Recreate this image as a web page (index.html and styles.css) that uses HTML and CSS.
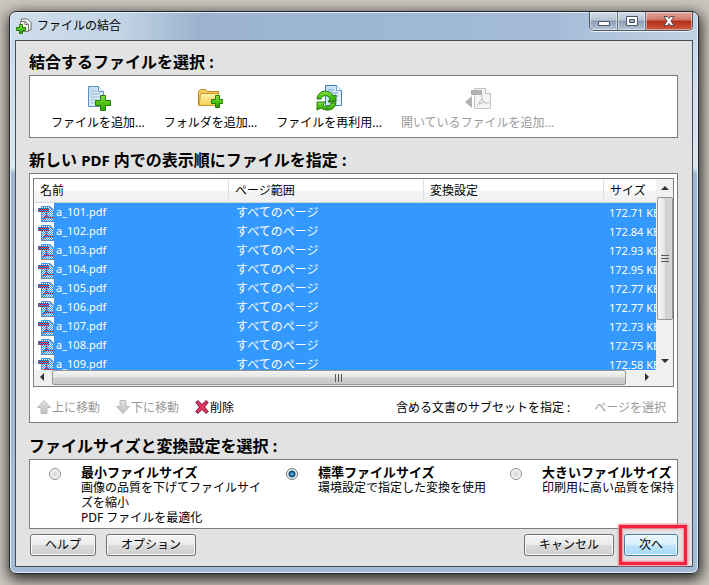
FILE: index.html
```html
<!DOCTYPE html>
<html lang="ja">
<head>
<meta charset="utf-8">
<title>ファイルの結合</title>
<link rel="stylesheet" href="styles.css">
</head>
<body>
<svg class="defs" aria-hidden="true">
  <defs>
    <linearGradient id="green" x1="0" y1="0" x2="0" y2="1"><stop offset="0" stop-color="#8be04a"/><stop offset=".5" stop-color="#4cc414"/><stop offset="1" stop-color="#2f9a08"/></linearGradient>
    <linearGradient id="sheet" x1="0" y1="0" x2="1" y2="1"><stop offset="0" stop-color="#b9daf2"/><stop offset="1" stop-color="#f4faff"/></linearGradient>
    <linearGradient id="gold" x1="0" y1="0" x2="0" y2="1"><stop offset="0" stop-color="#fff3a8"/><stop offset="1" stop-color="#f5cd52"/></linearGradient>
    <linearGradient id="silver" x1="0" y1="0" x2="0" y2="1"><stop offset="0" stop-color="#e4e4e4"/><stop offset="1" stop-color="#bdbdbd"/></linearGradient>
    <pattern id="dither" width="2" height="2" patternUnits="userSpaceOnUse"><path d="M0 0h1v1H0zM1 1h1v1H1z" fill="#3399ff"/></pattern>
    <symbol id="pdf" viewBox="0 0 16 16">
      <path d="M3.500 .5h8l4 4v11h-12z" fill="#eef3fa" stroke="#7088a8"/>
      <path d="M0 2h11v4H0z" fill="#b01828"/>
      <path d="M8.500 6v3L5 14M8.500 9l3 2.500h4M7 12l4-1" fill="none" stroke="#b01828" stroke-width="1.500"/>
      <path d="M0 2h3V0h9l4 4v12H3V6H0z" fill="url(#dither)"/>
    </symbol>
  </defs>
</svg>
<main class="window">
  <header class="titlebar">
    <svg class="app-icon" width="16" height="16" viewBox="0 0 16 16" aria-hidden="true">
      <path d="M5.500 3V1h6L15 4.500V12h-2.500" fill="#fff" stroke="#666"/>
      <path d="M4.500 3.500h5l3 3v7h-8z" fill="#eee" stroke="#777"/>
      <path d="M9 3.500v3h3.500" fill="none" stroke="#777"/>
      <path d="M3.500 6.500h3v3h3v3h-3v3h-3v-3h-3v-3h3z" fill="url(#green)" stroke="#22790a"/>
    </svg>
    <h1>ファイルの結合</h1>
    <div class="caption">
      <button type="button" aria-label="最小化"><svg width="14" height="12" viewBox="0 0 14 12"><path d="M1.500 6.500h11v4h-11z" fill="#fff" stroke="#4b5568"/></svg></button>
      <button type="button" aria-label="最大化"><svg width="14" height="12" viewBox="0 0 14 12"><path fill-rule="evenodd" d="M1.500 1.500h11v9h-11zM4.500 4.500v3h5v-3z" fill="#fff" stroke="#4b5568"/></svg></button>
      <button type="button" class="close" aria-label="閉じる"><svg width="14" height="12" viewBox="0 0 14 12"><path d="M2 1.500h3.500L7 3.500l1.500-2H12L9 6l3 4.500H8.500L7 8.500l-1.500 2H2L5 6z" fill="#fff" stroke="#57404a"/></svg></button>
    </div>
  </header>

  <div class="content">
    <h2>結合するファイルを選択 :</h2>
    <div class="panel toolbar">
      <button type="button">
        <svg width="26" height="26" viewBox="0 0 26 26" aria-hidden="true">
          <path d="M3.500 1.500h10l5 5v15h-15z" fill="url(#sheet)" stroke="#5d93be"/>
          <path d="M13.500 1.500v5h5" fill="#fff" stroke="#5d93be"/>
          <path d="M6 6h6M6 9h9M6 12h9M6 15h7M6 18h6" stroke="#9db9d0"/>
          <path d="M15.500 10.500h5v5h5v5h-5v5h-5v-5h-5v-5h5z" fill="url(#green)" stroke="#247c0b"/>
        </svg>
        <span>ファイルを追加...</span>
      </button>
      <button type="button">
        <svg width="26" height="26" viewBox="0 0 26 26" aria-hidden="true">
          <path d="M1.500 20.500v-14l2-2h5l2 2h11v14z" fill="#f3cf62" stroke="#bd8a25"/>
          <path d="M3.500 8.500h18l-1 12H2z" fill="url(#gold)" stroke="#cb9930"/>
          <path d="M18.500 10.500h4v4h4v4h-4v4h-4v-4h-4v-4h4z" fill="url(#green)" stroke="#247c0b"/>
        </svg>
        <span>フォルダを追加...</span>
      </button>
      <button type="button">
        <svg width="26" height="26" viewBox="0 0 26 26" aria-hidden="true">
          <path d="M9.500 .5h11l5 5v15h-16z" fill="url(#sheet)" stroke="#3d7fb8"/>
          <path d="M20.500 .5v5h5M12 5h6M12 8h10M12 11h10" fill="#fff" stroke="#76a3c8"/>
          <path d="M1 14C2 4 14 4 17 11l3-1v7h-8l2-3C12 9 6 10 5 14z" fill="url(#green)" stroke="#217b0b"/>
          <path d="M20 18C18 27 9 26 5 23l-4 2v-8h8l-2 3c3 3 7 2 8-2z" fill="url(#green)" stroke="#217b0b"/>
        </svg>
        <span>ファイルを再利用...</span>
      </button>
      <button type="button" disabled>
        <svg width="26" height="26" viewBox="0 0 26 26" aria-hidden="true">
          <path d="M9.500 3.500h11l5 5v15h-16z" fill="#f4f4f4" stroke="#c4c4c4"/>
          <path d="M20.500 3.500v5h5" fill="#fff" stroke="#c4c4c4"/>
          <path d="M6 5h11v5H6z" fill="#b0b0b0"/>
          <path d="M17 10v4L12 21M17 14l3 4h4M14 19l5-2" fill="none" stroke="#bbb"/>
          <path d="M0 17l7-6v12z" fill="#b0b0b0"/>
        </svg>
        <span>開いているファイルを追加...</span>
      </button>
    </div>

    <h2>新しい <span class="latin">PDF</span> 内での表示順にファイルを指定 :</h2>
    <div class="panel files">
      <div class="list">
        <div class="viewport">
          <table>
            <colgroup><col class="c-name"><col class="c-range"><col><col class="c-size"></colgroup>
            <thead><tr><th scope="col">名前</th><th scope="col">ページ範囲</th><th scope="col">変換設定</th><th scope="col">サイズ</th></tr></thead>
            <tbody>
              <tr><td><svg><use href="#pdf"/></svg>a_101.pdf</td><td>すべてのページ</td><td></td><td>172.71 KB</td></tr>
              <tr><td><svg><use href="#pdf"/></svg>a_102.pdf</td><td>すべてのページ</td><td></td><td>172.84 KB</td></tr>
              <tr><td><svg><use href="#pdf"/></svg>a_103.pdf</td><td>すべてのページ</td><td></td><td>172.93 KB</td></tr>
              <tr><td><svg><use href="#pdf"/></svg>a_104.pdf</td><td>すべてのページ</td><td></td><td>172.95 KB</td></tr>
              <tr><td><svg><use href="#pdf"/></svg>a_105.pdf</td><td>すべてのページ</td><td></td><td>172.77 KB</td></tr>
              <tr><td><svg><use href="#pdf"/></svg>a_106.pdf</td><td>すべてのページ</td><td></td><td>172.77 KB</td></tr>
              <tr><td><svg><use href="#pdf"/></svg>a_107.pdf</td><td>すべてのページ</td><td></td><td>172.73 KB</td></tr>
              <tr><td><svg><use href="#pdf"/></svg>a_108.pdf</td><td>すべてのページ</td><td></td><td>172.75 KB</td></tr>
              <tr><td><svg><use href="#pdf"/></svg>a_109.pdf</td><td>すべてのページ</td><td></td><td>172.58 KB</td></tr>
            </tbody>
          </table>
        </div>
        <div class="vbar">
          <svg width="16" height="17" viewBox="0 0 16 17"><path d="M4 11l4-4 4 4z" fill="#333"/></svg>
          <div class="thumb"><svg width="8" height="8" viewBox="0 0 8 8"><path d="M0 .5h8M0 3.500h8M0 6.500h8" stroke="#555"/></svg></div>
          <svg width="16" height="17" viewBox="0 0 16 17"><path d="M4 6h8l-4 4z" fill="#333"/></svg>
        </div>
        <div class="hbar">
          <svg width="18" height="15" viewBox="0 0 18 15"><path d="M10 3v8L6 7z" fill="#333"/></svg>
          <div class="thumb"><svg width="8" height="8" viewBox="0 0 8 8"><path d="M.5 0v8M3.500 0v8M6.500 0v8" stroke="#555"/></svg></div>
          <svg width="18" height="15" viewBox="0 0 18 15"><path d="M7 3v8l4-4z" fill="#333"/></svg>
        </div>
        <div class="corner"></div>
      </div>
      <div class="actions">
        <button type="button" disabled><svg width="14" height="14" viewBox="0 0 14 14"><path d="M7 .5l6.500 7H10v6H4v-6H.5z" fill="url(#silver)" stroke="#bcbcbc"/></svg>上に移動</button>
        <button type="button" disabled><svg width="14" height="14" viewBox="0 0 14 14"><path d="M7 13.500l6.500-7H10v-6H4v6H.5z" fill="url(#silver)" stroke="#bcbcbc"/></svg>下に移動</button>
        <button type="button"><svg width="14" height="14" viewBox="0 0 14 14"><path d="M.8 2.500l2-2L7 4.500l4.200-4 2 2L9.500 7l3.700 4.500-2 2L7 9.500l-4.200 4-2-2L4.500 7z" fill="#e0355f" stroke="#7c1237"/></svg>削除</button>
        <span class="subset">含める文書のサブセットを指定 :</span>
        <button type="button" disabled>ページを選択</button>
      </div>
    </div>

    <h2>ファイルサイズと変換設定を選択 :</h2>
    <div class="panel sizes">
      <label><input type="radio" name="size"><span><b>最小ファイルサイズ</b>画像の品質を下げてファイルサイズを縮小<br>PDF ファイルを最適化</span></label>
      <label><input type="radio" name="size" checked><span><b>標準ファイルサイズ</b>環境設定で指定した変換を使用</span></label>
      <label><input type="radio" name="size"><span><b>大きいファイルサイズ</b>印刷用に高い品質を保持</span></label>
    </div>

    <footer>
      <button type="button" class="btn small">ヘルプ</button>
      <button type="button" class="btn">オプション</button>
      <button type="button" class="btn cancel">キャンセル</button>
      <button type="button" class="btn next">次へ</button>
    </footer>
  </div>
</main>
</body>
</html>
```
FILE: styles.css
```css
* { box-sizing: border-box; }

body {
  margin: 0;
  min-height: 100vh;
  padding: 11px 10px 11px 9px;
  background: #cbc7c0;
  color: #000;
  font: 12px/15px "Noto Sans", "Noto Sans CJK JP", sans-serif;
}

button { font: inherit; color: inherit; white-space: nowrap; }
svg { flex: none; display: block; }
.defs { position: absolute; width: 0; height: 0; }

.window {
  padding: 0 5px 6px;
  border: 1px solid #20262e;
  border-radius: 7px;
  background:
    linear-gradient(90deg, #cfdeeb 0, #c3d4e5 110px, #9bb3ce 190px, #9fb9d5 420px, #a4bbd8 540px, #c2d2e2 100%) 0 0 / 100% 28px no-repeat,
    linear-gradient(180deg, #c6d7e7 0, #dae6f0 156px, #9db6d2 162px, #a3bcd8 100%);
  box-shadow: inset 0 0 0 1px #e3edf6, 1px 4px 14px 2px rgba(20, 18, 14, .85);
}

.titlebar { display: flex; height: 28px; padding-left: 1px; }
.app-icon { margin-top: 6px; }
.titlebar h1 {
  flex: 1;
  margin: 0 0 0 5px;
  font-size: 12px;
  font-weight: 400;
  line-height: 28px;
}
.caption {
  display: flex;
  height: 19px;
  border: 1px solid #4c5563;
  border-top: 0;
  border-radius: 0 0 5px 5px;
  overflow: hidden;
  box-shadow: 0 1px 0 #edf4fa;
}
.caption button {
  display: grid;
  place-items: center;
  width: 28px;
  padding: 0;
  border: 0;
  border-right: 1px solid #66717f;
  background: linear-gradient(#d3dce6 0, #b9c5d3 45%, #8d9db2 50%, #b5c4d5 100%);
  box-shadow: inset 0 0 0 1px rgba(255, 255, 255, .45);
}
.caption .close {
  width: 46px;
  border: 0;
  background: linear-gradient(#e5aa9e 0, #cf7463 45%, #b32d18 50%, #cc5840 100%);
}

.content {
  padding: 0 14px 10px 13px;
  border: 1px solid #444d59;
  background: #e2e2e2;
}
h2 { margin: 9px 0 1px; font-size: 16px; font-weight: 700; line-height: 24px; }
.toolbar + h2 { margin-top: 10px; }
.files + h2 { margin-top: 11px; }
.latin { font-size: 15px; }

.panel { border: 1px solid #7c7c7c; background: #fff; }

.toolbar { display: flex; gap: 19px; padding: 9px 21px 7px; }
.toolbar button, .actions button {
  padding: 0;
  border: 0;
  background: none;
}
.toolbar button { display: flex; flex-direction: column; align-items: center; gap: 4px; }
button:disabled { color: #999; }

.files { padding: 4px 3px 0; }
.list {
  display: grid;
  grid-template: 191px 16px / minmax(0, 1fr) 17px;
  border: 1px solid #7c7c7c;
}
.viewport { overflow: hidden; }
table { width: 100%; table-layout: fixed; border-collapse: separate; border-spacing: 0; }
.c-name { width: 195px; }
.c-range { width: 195px; }
.c-size { width: 52px; }
th {
  height: 24px;
  padding: 0 6px;
  border-right: 1px solid #dfe2e6;
  border-bottom: 1px solid #d2d4d8;
  background: linear-gradient(#fff 0, #fff 50%, #f3f4f6 55%, #f0f1f3 100%);
  font-weight: 400;
  text-align: left;
}
th:last-child { border-right: 0; }
td {
  height: 19px;
  padding: 0 0 0 7px;
  overflow: hidden;
  background: #39f;
  color: #fff;
  white-space: nowrap;
  line-height: 18px;
}
td:first-child { padding-left: 4px; background: linear-gradient(90deg, #fff 20px, #39f 20px); font-size: 11px; }
td:last-child { padding-left: 5px; font-size: 11px; }
td svg { display: inline-block; width: 16px; height: 16px; margin-right: 2px; vertical-align: middle; }

.vbar, .hbar { display: flex; background: #f0f0f0; }
.vbar { flex-direction: column; padding-left: 1px; }
.thumb { display: grid; place-items: center; border: 1px solid #959595; border-radius: 2px; }
.vbar .thumb { flex: 0 1 123px; margin: 1px 0 auto; background: linear-gradient(90deg, #f5f5f5, #e4e4e4 48%, #cfcfcf 52%, #d6d6d6); }
.hbar .thumb { flex: 1; margin: 0 12px 1px 0; background: linear-gradient(#f5f5f5, #e4e4e4 48%, #cfcfcf 52%, #c8c8c8); }
.corner { background: #f0f0f0; }

.actions { display: flex; align-items: center; height: 35px; padding: 5px 8px 0 4px; }
.actions button { display: flex; align-items: center; gap: 1px; margin-right: 16px; }
.actions button:last-child { margin-right: 0; }
.subset { margin: 0 24px 0 auto; }

.sizes {
  display: grid;
  grid-template-columns: 237fr 224fr 167fr;
  min-height: 70px;
  padding: 4px 0 3px 19px;
}
.sizes label { display: flex; align-items: flex-start; }
.sizes span { max-width: 190px; }
.sizes b { display: block; font-size: 13px; line-height: 16px; }
input[type="radio"] {
  appearance: none;
  flex: none;
  width: 12px;
  height: 12px;
  margin: 4px 20px 0 0;
  border: 1px solid #8b8f94;
  border-radius: 50%;
  background: radial-gradient(circle, #d4d7da 0, #e6e8e9 3px, #fafafa 5px);
}
input[type="radio"]:checked {
  border-color: #6a7680;
  background: radial-gradient(circle, #5bc8f2 0, #1f6d9c 2px, #123f5f 3px, #f4f7f9 4px);
}

footer { display: flex; gap: 10px; margin-top: 5px; padding: 0 0 0 1px; }
.btn {
  width: 90px;
  height: 22px;
  padding: 0;
  border: 1px solid #707070;
  border-radius: 3px;
  background: linear-gradient(#f4f4f4 0, #ebebeb 48%, #dadada 52%, #cfcfcf 100%);
  box-shadow: inset 0 0 0 1px #fafafa;
  line-height: 18px;
}
.small { width: 66px; }
.cancel { margin-left: auto; }
.next {
  position: relative;
  width: 54px;
  border-color: #3c7fb1;
  background: linear-gradient(#eaf6fd 0, #d9f0fc 48%, #bee6fd 52%, #a7d9f5 100%);
}
.next::after {
  content: "";
  position: absolute;
  inset: -10px -10px -10px -6px;
  border: 3px solid #f5213f;
  box-shadow: 0 0 2px 1px #f88a98, inset 0 0 2px 1px #f88a98;
  pointer-events: none;
}
```
